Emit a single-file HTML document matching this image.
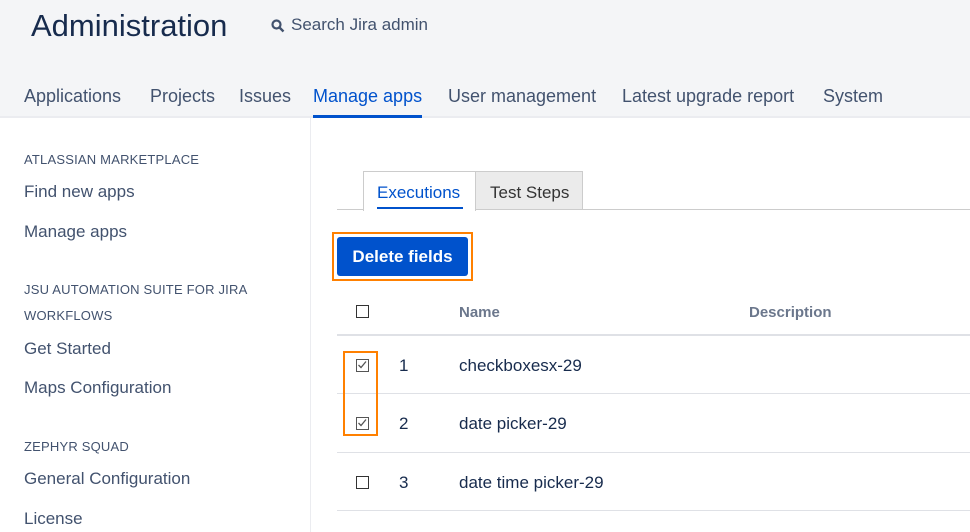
<!DOCTYPE html>
<html><head><style>
*{margin:0;padding:0;box-sizing:border-box}
body{width:970px;height:532px;overflow:hidden;background:#fff;font-family:"Liberation Sans",sans-serif;color:#172b4d;position:relative}
.a{position:absolute;white-space:nowrap}
.hdr{position:absolute;left:0;top:0;width:970px;height:118px;background:#f4f5f7;border-bottom:2px solid #ebecf0}
.nav{font-size:18px;color:#42526e;top:86px}
.side1{font-size:13px;color:#42526e;letter-spacing:.2px}
.side2{font-size:17px;color:#42526e}
.cb{position:absolute;width:13px;height:13px;border:1.5px solid #333;background:#fff}
.line{position:absolute;left:337px;width:633px;height:1px;background:#dfe1e6}
.td{font-size:17px;color:#172b4d}
</style></head><body>
<div class="hdr"></div>
<div class="a" style="left:31px;top:8px;font-size:31px;color:#172b4d">Administration</div>
<svg class="a" style="left:271px;top:19px" width="14" height="14" viewBox="0 0 14 14"><circle cx="5.5" cy="5.5" r="4" fill="none" stroke="#42526e" stroke-width="2.2"/><path d="M8.5 8.5L12.5 12.5" stroke="#42526e" stroke-width="2.4"/></svg>
<div class="a" style="left:291px;top:15px;font-size:17px;color:#42526e">Search Jira admin</div>
<div class="a nav" style="left:24px">Applications</div>
<div class="a nav" style="left:150px">Projects</div>
<div class="a nav" style="left:239px">Issues</div>
<div class="a nav" style="left:313px;color:#0052cc">Manage apps</div>
<div class="a" style="left:313px;top:115px;width:109px;height:3px;background:#0052cc"></div>
<div class="a nav" style="left:448px">User management</div>
<div class="a nav" style="left:622px">Latest upgrade report</div>
<div class="a nav" style="left:823px">System</div>
<div class="a" style="left:310px;top:118px;width:1px;height:414px;background:#ebecf0"></div>
<div class="a side1" style="left:24px;top:152px">ATLASSIAN MARKETPLACE</div>
<div class="a side2" style="left:24px;top:182px">Find new apps</div>
<div class="a side2" style="left:24px;top:222px">Manage apps</div>
<div class="a side1" style="left:24px;top:282px">JSU AUTOMATION SUITE FOR JIRA</div>
<div class="a side1" style="left:24px;top:308px">WORKFLOWS</div>
<div class="a side2" style="left:24px;top:339px">Get Started</div>
<div class="a side2" style="left:24px;top:378px">Maps Configuration</div>
<div class="a side1" style="left:24px;top:439px">ZEPHYR SQUAD</div>
<div class="a side2" style="left:24px;top:469px">General Configuration</div>
<div class="a side2" style="left:24px;top:509px">License</div>
<div class="line" style="top:209px;background:#ccc"></div>
<div class="a" style="left:363px;top:171px;width:113px;height:40px;background:#fff;border:1px solid #ccc;border-bottom:none"></div>
<div class="a" style="left:377px;top:183px;font-size:17px;color:#0052cc">Executions</div>
<div class="a" style="left:377px;top:207px;width:86px;height:2px;background:#0052cc"></div>
<div class="a" style="left:476px;top:171px;width:107px;height:39px;background:#ebebeb;border:1px solid #ccc;border-left:none"></div>
<div class="a" style="left:490px;top:183px;font-size:17px;color:#333">Test Steps</div>
<div class="a" style="left:332px;top:232px;width:141px;height:49px;border:2px solid #ff8000"></div>
<div class="a" style="left:337px;top:237px;width:131px;height:39px;background:#0052cc;border-radius:3px;color:#fff;font-weight:bold;font-size:17px;line-height:39px;text-align:center">Delete fields</div>
<div class="cb" style="left:356px;top:305px"></div>
<div class="a" style="left:459px;top:304px;font-size:15px;font-weight:bold;color:#6b778c">Name</div>
<div class="a" style="left:749px;top:304px;font-size:15px;font-weight:bold;color:#6b778c">Description</div>
<div class="line" style="top:334px;height:2px"></div>
<div class="line" style="top:393px"></div>
<div class="line" style="top:452px"></div>
<div class="line" style="top:510px"></div>
<div class="a" style="left:343px;top:351px;width:35px;height:85px;border:2px solid #ff8000"></div>
<div class="cb" style="left:356px;top:359px;border-color:#555"><svg width="10" height="10" style="position:absolute;left:0;top:0"><path d="M1.5 5L4 7.5L9 1.5" fill="none" stroke="#555" stroke-width="1.3"/></svg></div>
<div class="cb" style="left:356px;top:417px;border-color:#555"><svg width="10" height="10" style="position:absolute;left:0;top:0"><path d="M1.5 5L4 7.5L9 1.5" fill="none" stroke="#555" stroke-width="1.3"/></svg></div>
<div class="cb" style="left:356px;top:476px"></div>
<div class="a td" style="left:399px;top:356px">1</div>
<div class="a td" style="left:459px;top:356px">checkboxesx-29</div>
<div class="a td" style="left:399px;top:414px">2</div>
<div class="a td" style="left:459px;top:414px">date picker-29</div>
<div class="a td" style="left:399px;top:473px">3</div>
<div class="a td" style="left:459px;top:473px">date time picker-29</div>
</body></html>
